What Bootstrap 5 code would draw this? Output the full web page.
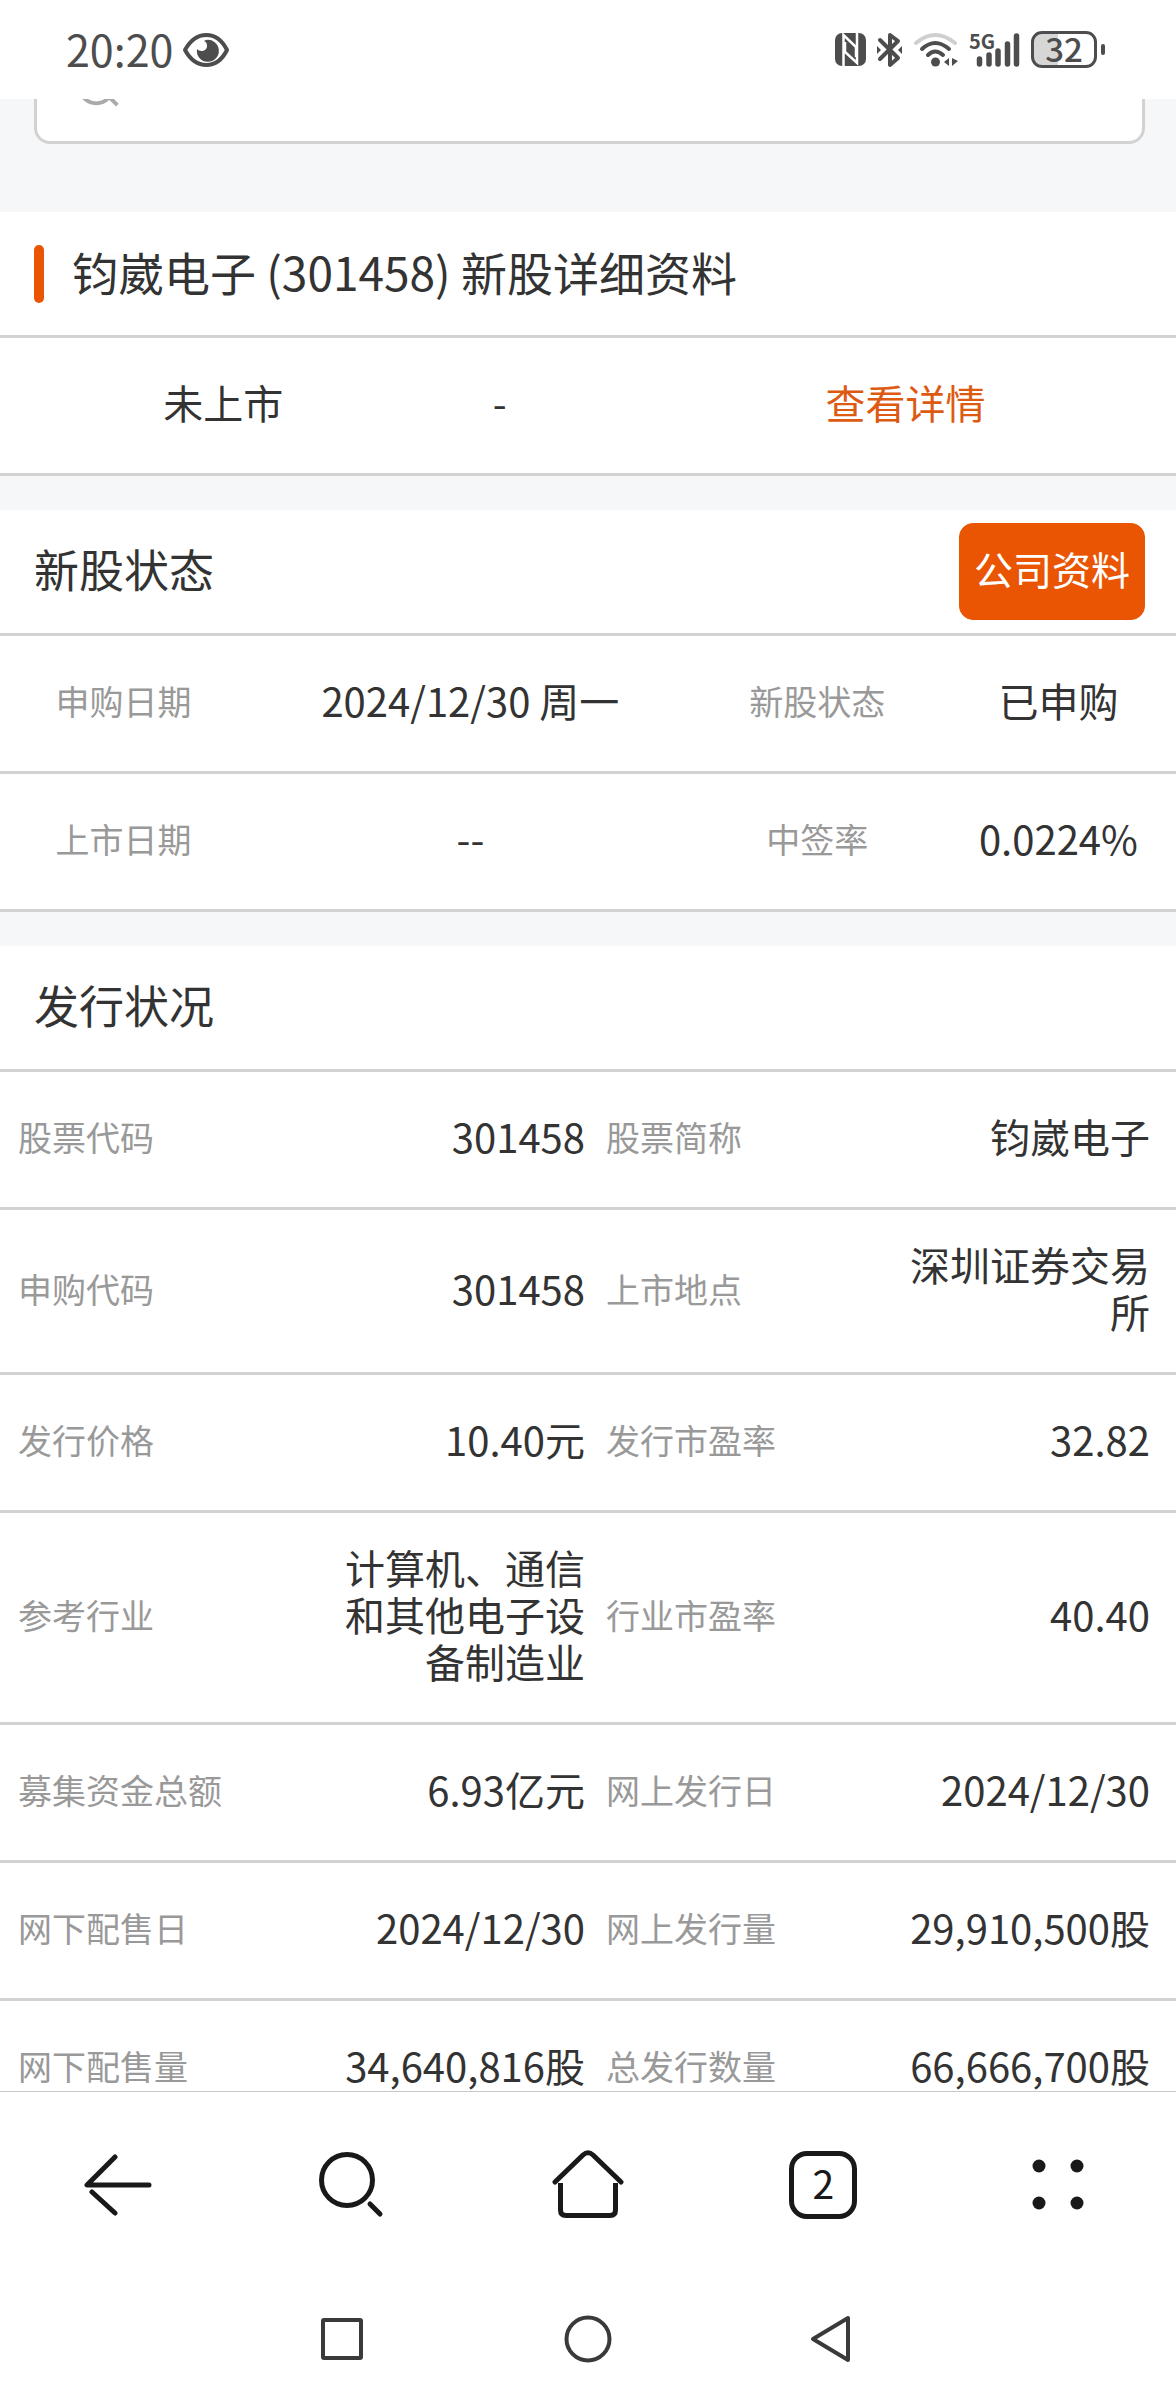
<!DOCTYPE html>
<html lang="zh-CN">
<head>
<meta charset="utf-8">
<meta name="viewport" content="width=device-width, initial-scale=1">
<title>钧崴电子 (301458) 新股详细资料</title>
<link href="https://cdn.jsdelivr.net/npm/bootstrap@5.3.0/dist/css/bootstrap.min.css" rel="stylesheet">
<style>
  body { font-family: "Noto Sans CJK SC", sans-serif; font-size: 40px; line-height: 47px; color: #333; background: #fff; }
  .status-bar { height: 99px; padding: 0 71px 0 66px; color: #4d4d4d; }
  .clock { font-size: 43px; padding-bottom: 2px; }
  .status-icons { gap: 10px; }
  .battery { width: 66px; height: 37px; border: 3px solid #4d4d4d; border-radius: 11px; font-size: 33px; line-height: 29px; font-weight: 500; background: linear-gradient(90deg, #d6d6d6 40%, #fff 40%); }
  .battery-tip { width: 4px; height: 11px; border-radius: 2px; background: #4d4d4d; }
  .page-scroll { background: #f6f7f9; min-height: 0; }
  .search-area { margin-top: -73px; padding: 0 31px 68px 34px; }
  .search-box { height: 118px; border: 3px solid #d2d2d2; border-radius: 16px; padding: 4px 42px 0; color: #aaa; }
  .search-box .form-control { font-size: 40px; }
  .sec-head { height: 126px; border-bottom: 3px solid #d2d2d2; padding: 0 31px 0 34px; }
  .sec-head h1, .sec-head h2 { font-size: 45px; line-height: 56px; font-weight: 400; padding-bottom: 6px; }
  .sec-head h1 { font-size: 46px; }
  .accent { width: 10px; height: 58px; border-radius: 5px; background: #ea5504; margin-right: 28px; }
  .sec-gap { margin-bottom: 34px; }
  .btn-brand { --bs-btn-bg: #ea5504; --bs-btn-color: #fff; --bs-btn-border-color: #ea5504; --bs-btn-hover-bg: #d04a00; --bs-btn-hover-color: #fff; font-size: 39px; line-height: 47px; padding: 21px 14px 27px; border-radius: 14px; }
  .brand-link { color: #dd5a12; }
  .grid-table { border-collapse: separate; border-spacing: 0; table-layout: fixed; color: #333; }
  .grid-table > tbody > tr > * { height: 138px; padding: 31px 0 37px; border-bottom: 3px solid #d2d2d2; vertical-align: middle; font-weight: 400; background: #fff; }
  .grid-table > tbody > tr > th { font-size: 34px; color: #999; }
  .listing > tbody > tr > td:first-child { padding-left: 82px; }
  .issue > tbody > tr > th { padding-left: 18px; }
  .issue > tbody > tr > td { text-align: right; padding-right: 3px; }
  .issue > tbody > tr > td:last-child { padding-right: 26px; }
  .tool-bar { height: 187px; border-top: 1px solid #c8c8c8; color: #191919; }
  .sys-bar { height: 122px; color: #3a3a3a; }
  .sys-keys { width: 62.5%; }
  .ic { fill: none; stroke: currentColor; stroke-width: 5; stroke-linecap: round; stroke-linejoin: round; display: block; }
  .bare { border: 0; background: none; color: inherit; padding: 0; }
  .tab-count { width: 68px; height: 68px; border: 5px solid #191919; border-radius: 18px; background: none; color: inherit; font-size: 39px; line-height: 52px; padding: 0 0 6px; }
</style>
</head>
<body>
<div class="d-flex flex-column vh-100 overflow-hidden">

  <header class="status-bar d-flex align-items-center justify-content-between flex-shrink-0 bg-white">
    <div class="d-flex align-items-center">
      <span class="clock">20:20</span>
      <svg class="ms-2" width="50" height="36" viewBox="0 0 50 36" aria-label="护眼模式">
        <path d="M4 18C15-2 36-2 46 18C36 38 15 38 4 18Z" fill="none" stroke="#4d4d4d" stroke-width="4" stroke-linejoin="round"/>
        <path d="M25 8A11 11 0 1 1 16 17C18 20 26 20 26 14C26 11 25 10 23 9Z" fill="#4d4d4d"/>
      </svg>
    </div>
    <div class="status-icons d-flex align-items-center">
      <svg width="31" height="33" viewBox="0 0 31 33" aria-label="NFC">
        <rect width="31" height="33" rx="7" fill="#4d4d4d"/>
        <path d="M8.500 33V2L21 14V24M22 0V30L10 19V9" fill="none" stroke="#fff" stroke-width="2.500"/>
      </svg>
      <svg width="27" height="36" viewBox="0 0 27 36" aria-label="蓝牙">
        <path d="M4 8L22 26L14 33V3L22 9L4 27" fill="none" stroke="#4d4d4d" stroke-width="4" stroke-linejoin="round" stroke-linecap="round"/>
        <path d="M1 14L5 18L1 22ZM26 14L22 18L26 22Z" fill="#4d4d4d"/>
      </svg>
      <svg width="46" height="36" viewBox="0 0 46 36" aria-label="无线网络">
        <g fill="none" stroke-width="4" stroke-linecap="round">
          <path d="M3 11Q22-5 42 11" stroke="#cfcfcf"/>
          <path d="M9 17Q22 5 36 17M15 23Q22 16 30 23" stroke="#4d4d4d"/>
        </g>
        <circle cx="22.500" cy="30" r="4.500" fill="#4d4d4d"/>
        <path d="M36 26V34L31 30ZM39 26V34L45 29Z" fill="#4d4d4d"/>
      </svg>
      <svg width="52" height="36" viewBox="0 0 52 36" overflow="visible" aria-label="5G 信号">
        <text x="0" y="17" font-size="20" font-weight="700" fill="#4d4d4d">5G</text>
        <path d="M10.500 27V32M20 23V32M29 19V32M38.500 12V32M47.500 4V32" stroke="#4d4d4d" stroke-width="5.500" stroke-linecap="round"/>
      </svg>
      <div class="d-flex align-items-center gap-1">
        <div class="battery text-center">32</div>
        <div class="battery-tip"></div>
      </div>
    </div>
  </header>

  <main class="page-scroll flex-fill overflow-hidden">
    <form class="search-area">
      <div class="search-box bg-white d-flex align-items-center">
        <svg width="42" height="42" viewBox="0 0 42 42" fill="none" stroke="currentColor" stroke-width="4"><circle cx="18" cy="20" r="18"/><path d="M30 30L40 40"/></svg>
        <input type="search" class="form-control border-0 shadow-none" aria-label="搜索股票">
      </div>
    </form>

    <section class="sec-gap">
      <div class="sec-head bg-white d-flex align-items-center">
        <span class="accent"></span>
        <h1 class="m-0">钧崴电子 (301458) 新股详细资料</h1>
      </div>
      <table class="table grid-table listing text-center mb-0">
        <colgroup><col style="width:31%"><col style="width:23%"><col style="width:46%"></colgroup>
        <tbody><tr><td>未上市</td><td>-</td><td><a href="#" class="brand-link text-decoration-none">查看详情</a></td></tr></tbody>
      </table>
    </section>

    <section class="sec-gap">
      <div class="sec-head bg-white d-flex align-items-center justify-content-between">
        <h2 class="m-0">新股状态</h2>
        <button type="button" class="btn btn-brand">公司资料</button>
      </div>
      <table class="table grid-table text-center mb-0">
        <colgroup><col style="width:21%"><col style="width:38%"><col style="width:21%"><col style="width:20%"></colgroup>
        <tbody>
          <tr><th scope="row">申购日期</th><td>2024/12/30 周一</td><th>新股状态</th><td>已申购</td></tr>
          <tr><th scope="row">上市日期</th><td>--</td><th>中签率</th><td>0.0224%</td></tr>
        </tbody>
      </table>
    </section>

    <section>
      <div class="sec-head bg-white d-flex align-items-center">
        <h2 class="m-0">发行状况</h2>
      </div>
      <table class="table grid-table issue mb-0">
        <colgroup><col style="width:27%"><col style="width:23%"><col style="width:26%"><col style="width:24%"></colgroup>
        <tbody>
          <tr><th scope="row">股票代码</th><td>301458</td><th>股票简称</th><td>钧崴电子</td></tr>
          <tr><th scope="row">申购代码</th><td>301458</td><th>上市地点</th><td>深圳证券交易所</td></tr>
          <tr><th scope="row">发行价格</th><td>10.40元</td><th>发行市盈率</th><td>32.82</td></tr>
          <tr><th scope="row">参考行业</th><td>计算机、通信和其他电子设备制造业</td><th>行业市盈率</th><td>40.40</td></tr>
          <tr><th scope="row">募集资金总额</th><td>6.93亿元</td><th>网上发行日</th><td>2024/12/30</td></tr>
          <tr><th scope="row">网下配售日</th><td>2024/12/30</td><th>网上发行量</th><td>29,910,500股</td></tr>
          <tr><th scope="row">网下配售量</th><td>34,640,816股</td><th>总发行数量</th><td>66,666,700股</td></tr>
        </tbody>
      </table>
    </section>
  </main>

  <nav class="tool-bar bg-white d-flex align-items-center flex-shrink-0" aria-label="浏览器工具栏">
    <div class="col d-flex justify-content-center"><button type="button" class="bare" aria-label="后退">
      <svg class="ic" width="68" height="64" viewBox="0 0 68 64"><path d="M31 4L3 32H65M8 39L31 60"/></svg></button></div>
    <div class="col d-flex justify-content-center"><button type="button" class="bare" aria-label="搜索">
      <svg class="ic" width="68" height="66" viewBox="0 0 68 66"><circle cx="28" cy="28" r="25.500"/><path d="M51 52L61 62"/></svg></button></div>
    <div class="col d-flex justify-content-center"><button type="button" class="bare" aria-label="主页">
      <svg class="ic" width="72" height="72" viewBox="0 0 72 72"><path d="M3 33L31 6Q36 1.500 41 6L69 33"/><path stroke-linecap="butt" d="M8.500 34V61Q8.500 66.500 14 66.500H58Q63.500 66.500 63.500 61V34"/><path d="M0 37L8 29L14 34L9 40Z" fill="none" stroke="none"/></svg></button></div>
    <div class="col d-flex justify-content-center"><button type="button" class="tab-count" aria-label="标签页 2">2</button></div>
    <div class="col d-flex justify-content-center"><button type="button" class="bare" aria-label="菜单">
      <svg width="52" height="52" viewBox="0 0 52 52" fill="currentColor" class="d-block"><circle cx="7" cy="7" r="6.500"/><circle cx="45" cy="7" r="6.500"/><circle cx="7" cy="44" r="6.500"/><circle cx="45" cy="44" r="6.500"/></svg></button></div>
  </nav>

  <nav class="sys-bar bg-white d-flex align-items-center justify-content-center flex-shrink-0" aria-label="系统导航">
    <div class="sys-keys d-flex">
      <div class="col d-flex justify-content-center"><button type="button" class="bare" aria-label="最近任务">
        <svg class="ic" width="46" height="46" viewBox="0 0 46 46"><rect x="3" y="4" width="38" height="38" rx="1" stroke-width="4"/></svg></button></div>
      <div class="col d-flex justify-content-center"><button type="button" class="bare" aria-label="桌面">
        <svg class="ic" width="48" height="48" viewBox="0 0 48 48"><circle cx="24" cy="24" r="21.500" stroke-width="4"/></svg></button></div>
      <div class="col d-flex justify-content-center"><button type="button" class="bare" aria-label="返回">
        <svg class="ic" width="46" height="48" viewBox="0 0 46 48"><path d="M3 24L38 3V45Z" stroke-width="4"/></svg></button></div>
    </div>
  </nav>
</div>
<script src="https://cdn.jsdelivr.net/npm/bootstrap@5.3.0/dist/js/bootstrap.bundle.min.js"></script>
</body>
</html>
